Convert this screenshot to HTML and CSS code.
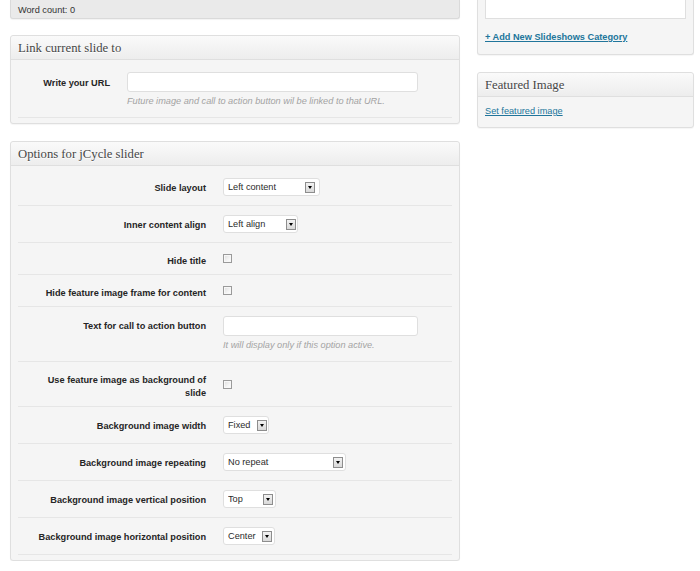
FILE: index.html
```html
<!DOCTYPE html>
<html lang="en">
<head>
<meta charset="utf-8">
<title>Edit Slide</title>
<link rel="stylesheet" href="styles.css">
</head>
<body>
<div class="page">
  <div class="main">
    <div class="status-bar">Word count: 0</div>

    <div class="postbox">
      <h3 class="postbox-title">Link current slide to</h3>
      <div class="postbox-body">
        <div class="form-row form-row--link form-row--control">
          <label class="form-label" for="slide-url">Write your URL</label>
          <div class="form-field">
            <input type="text" id="slide-url" class="text-input text-input--url">
            <p class="help">Future image and call to action button wil be linked to that URL.</p>
          </div>
        </div>
      </div>
    </div>

    <div class="postbox postbox--options">
      <h3 class="postbox-title">Options for jCycle slider</h3>
      <div class="postbox-body">
        <div class="form-row form-row--control">
          <label class="form-label" for="slide-layout">Slide layout</label>
          <div class="form-field">
            <span class="select select--layout"><select id="slide-layout"><option>Left content</option><option>Right content</option></select><span class="select-btn"></span></span>
          </div>
        </div>
        <div class="form-row form-row--control">
          <label class="form-label" for="inner-align">Inner content align</label>
          <div class="form-field">
            <span class="select select--align"><select id="inner-align"><option>Left align</option></select><span class="select-btn"></span></span>
          </div>
        </div>
        <div class="form-row">
          <label class="form-label" for="hide-title">Hide title</label>
          <div class="form-field form-field--check">
            <input type="checkbox" id="hide-title" class="checkbox">
          </div>
        </div>
        <div class="form-row">
          <label class="form-label" for="hide-frame">Hide feature image frame for content</label>
          <div class="form-field form-field--check">
            <input type="checkbox" id="hide-frame" class="checkbox">
          </div>
        </div>
        <div class="form-row form-row--control">
          <label class="form-label" for="cta-text">Text for call to action button</label>
          <div class="form-field">
            <input type="text" id="cta-text" class="text-input text-input--cta">
            <p class="help">It will display only if this option active.</p>
          </div>
        </div>
        <div class="form-row">
          <label class="form-label" for="bg-feature">Use feature image as background of slide</label>
          <div class="form-field form-field--check">
            <input type="checkbox" id="bg-feature" class="checkbox">
          </div>
        </div>
        <div class="form-row form-row--control">
          <label class="form-label" for="bg-width">Background image width</label>
          <div class="form-field">
            <span class="select select--fixed"><select id="bg-width"><option>Fixed</option></select><span class="select-btn"></span></span>
          </div>
        </div>
        <div class="form-row form-row--control">
          <label class="form-label" for="bg-repeat">Background image repeating</label>
          <div class="form-field">
            <span class="select select--repeat"><select id="bg-repeat"><option>No repeat</option></select><span class="select-btn"></span></span>
          </div>
        </div>
        <div class="form-row form-row--control">
          <label class="form-label" for="bg-vpos">Background image vertical position</label>
          <div class="form-field">
            <span class="select select--vpos"><select id="bg-vpos"><option>Top</option></select><span class="select-btn"></span></span>
          </div>
        </div>
        <div class="form-row form-row--control">
          <label class="form-label" for="bg-hpos">Background image horizontal position</label>
          <div class="form-field">
            <span class="select select--hpos"><select id="bg-hpos"><option>Center</option></select><span class="select-btn"></span></span>
          </div>
        </div>
      </div>
    </div>
  </div>

  <div class="side">
    <div class="sidebox sidebox--cont">
      <div class="category-list"></div>
      <a class="add-link" href="#">+ Add New Slideshows Category</a>
    </div>
    <div class="sidebox sidebox--featured">
      <h3 class="postbox-title">Featured Image</h3>
      <div class="sidebox-body">
        <a class="plain-link" href="#">Set featured image</a>
      </div>
    </div>
  </div>
</div>
</body>
</html>
```

FILE: styles.css
```css
* { box-sizing: border-box; }

body {
  margin: 0;
  background: #fff;
  font-family: "Liberation Sans", Arial, sans-serif;
  font-size: 9.2px;
  color: #333;
}

.page {
  display: flex;
  align-items: flex-start;
  gap: 17px;
  padding-left: 10px;
  width: 700px;
}

.main { width: 450px; flex: none; }
.side { width: 217px; flex: none; }

.status-bar {
  height: 19px;
  background: #eaeaea;
  border: 1px solid #dadada;
  border-top: 0;
  border-radius: 0 0 3px 3px;
  padding: 2px 0 0 7px;
  line-height: 16px;
  color: #333;
  box-shadow: 0 1px 1px rgba(0,0,0,.05);
}

.postbox {
  margin-top: 16px;
  border: 1px solid #dfdfdf;
  border-radius: 3px;
  background: #f5f5f5;
  box-shadow: 0 1px 1px rgba(0,0,0,.04);
}
.postbox--options { margin-top: 17px; }

.postbox-title {
  margin: 0;
  height: 24px;
  padding-left: 7px;
  border-bottom: 1px solid #dfdfdf;
  border-radius: 3px 3px 0 0;
  background: linear-gradient(#fafafa, #ededed);
  font-family: "Liberation Serif", Georgia, serif;
  font-weight: normal;
  font-size: 12.7px;
  line-height: 24px;
  color: #464646;
  text-shadow: 0 1px 0 #fff;
}

.postbox-body { padding: 3px 7px 5px; }

.form-row {
  display: grid;
  grid-template-columns: 188px 1fr;
  column-gap: 17px;
  border-bottom: 1px solid #e6e6e6;
}
.form-row--link { grid-template-columns: 92px 1fr; }

.form-label {
  padding: 12px 0 6px 10px;
  text-align: right;
  font-weight: bold;
  line-height: 13px;
  color: #252525;
}
.form-row--control .form-label { padding-top: 13px; }
.form-row--link .form-label { padding: 14px 0 6px; }

.form-field { padding: 9px 0; }
.form-field--check {
  display: flex;
  align-items: center;
  padding: 0;
}

.text-input {
  display: block;
  height: 20px;
  margin: 0;
  border: 1px solid #dfdfdf;
  border-radius: 3px;
  background: #fff;
  font: inherit;
}
.text-input--url { width: 291px; }
.text-input--cta { width: 195px; }

.help {
  margin: 3px 0 0;
  line-height: 13px;
  font-style: italic;
  color: #a3a3a3;
}

.select {
  display: inline-flex;
  align-items: center;
  height: 18px;
  padding-right: 2px;
  border: 1px solid #dfdfdf;
  border-radius: 3px;
  background: #fff;
  vertical-align: top;
}
.select select {
  flex: 1;
  min-width: 0;
  height: 16px;
  margin: 0;
  padding: 0 0 0 4px;
  border: 0;
  background: transparent;
  -webkit-appearance: none;
  appearance: none;
  font: inherit;
  color: #2b2b2b;
  outline: none;
}
.select-btn {
  flex: none;
  width: 10px;
  height: 11px;
  border: 1px solid #8d8d8d;
  background: linear-gradient(#f2f2f2, #d9d9d9);
  display: flex;
  align-items: center;
  justify-content: center;
}
.select-btn::before {
  content: "";
  border-left: 2.5px solid transparent;
  border-right: 2.5px solid transparent;
  border-top: 3px solid #000;
}
.select--layout { width: 97px; padding-right: 4px; }
.select--align { width: 75px; padding-right: 1px; }
.select--fixed { width: 46px; padding-right: 1px; }
.select--repeat { width: 123px; }
.select--vpos { width: 53px; }
.select--hpos { width: 52px; }

.checkbox {
  -webkit-appearance: none;
  appearance: none;
  width: 9px;
  height: 9px;
  margin: 0;
  border: 1px solid #9a9a9a;
  background: linear-gradient(135deg, #dcdcdc, #f4f4f4 60%, #fff);
  box-shadow: inset 0 0 0 1px #f7f7f7;
}

.sidebox {
  border: 1px solid #dfdfdf;
  border-radius: 3px;
  background: #f5f5f5;
  box-shadow: 0 1px 1px rgba(0,0,0,.04);
}
.sidebox--cont {
  border-top: 0;
  border-radius: 0 0 3px 3px;
  padding: 0 7px 10px;
}
.sidebox--featured { margin-top: 17px; }

.category-list {
  height: 19px;
  border: 1px solid #dfdfdf;
  border-top: 0;
  background: #fff;
}

.add-link {
  display: block;
  margin-top: 12px;
  line-height: 13px;
  font-weight: bold;
  color: #21759b;
  text-decoration: underline;
}

.sidebox-body { padding: 8px 7px 9px; }

.plain-link {
  display: block;
  line-height: 13px;
  color: #21759b;
  text-decoration: underline;
}
```
